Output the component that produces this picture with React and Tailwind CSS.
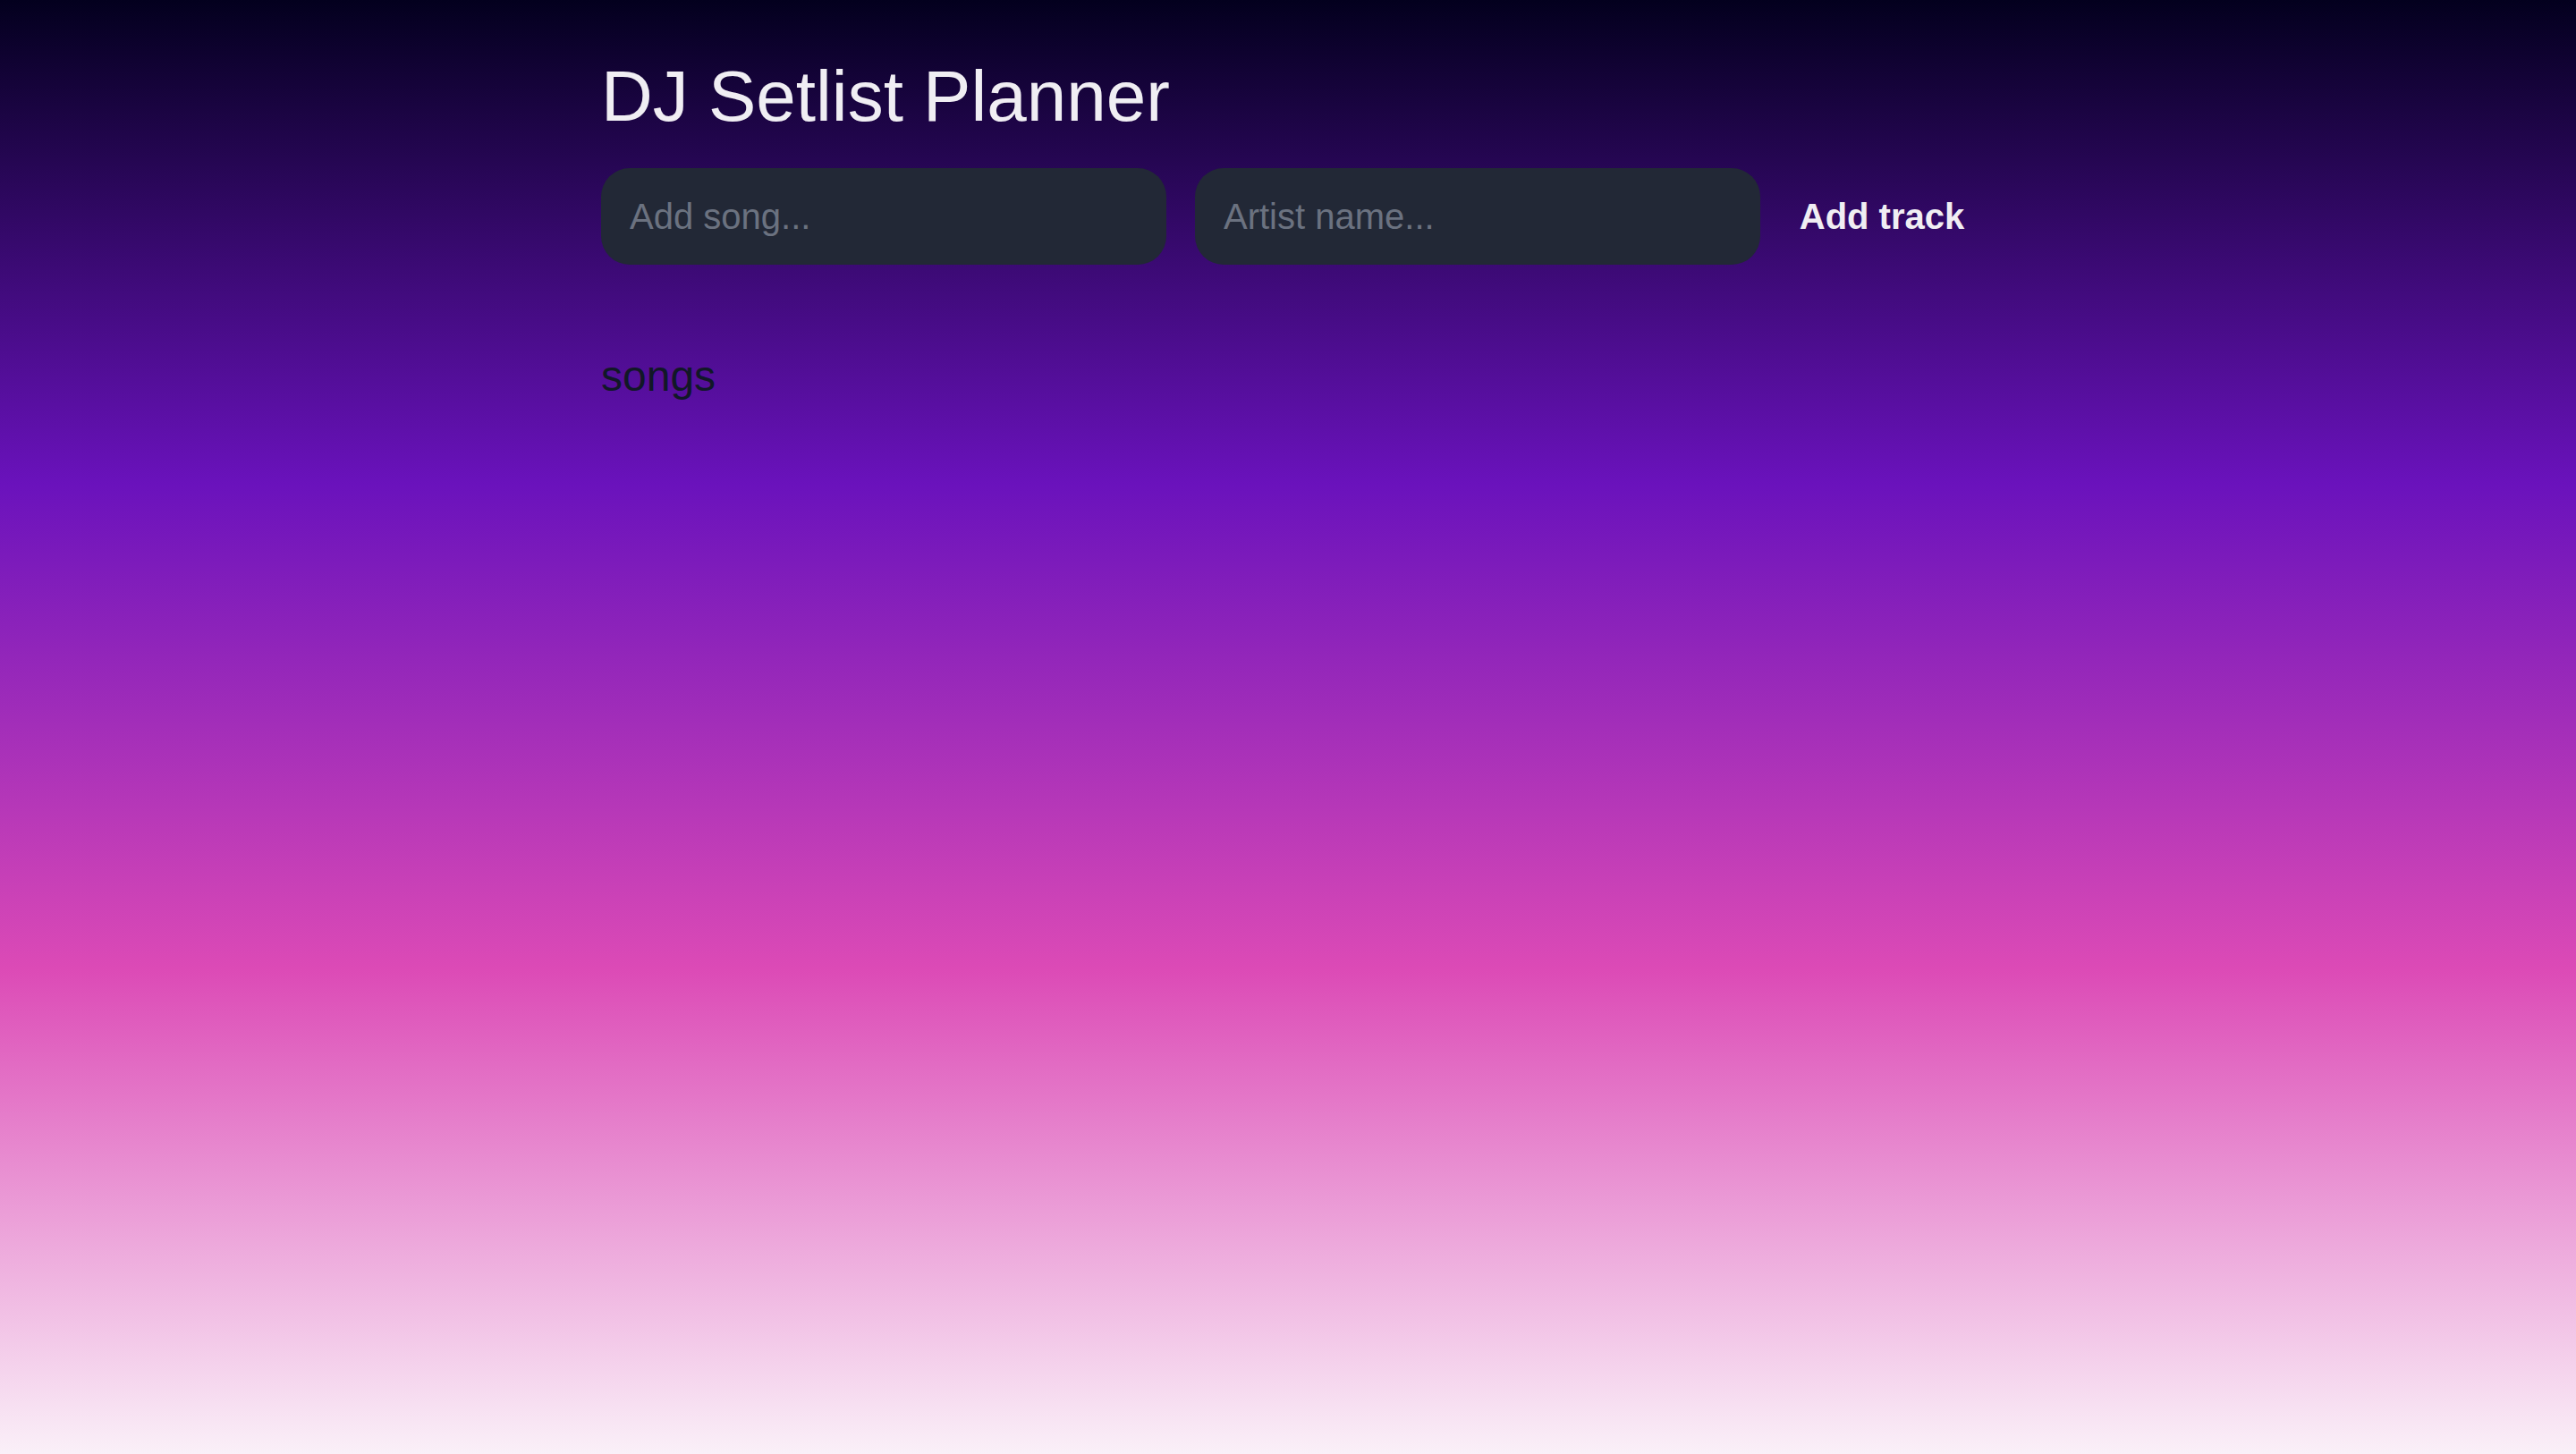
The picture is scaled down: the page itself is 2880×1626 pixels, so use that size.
import { useState } from "react";

export default function App() {
  const [song, setSong] = useState("");
  const [artist, setArtist] = useState("");
  const [songs, setSongs] = useState([]);

  const addTrack = () => {
    if (!song.trim()) return;
    setSongs([...songs, { song, artist }]);
    setSong("");
    setArtist("");
  };

  return (
    <div className="min-h-screen bg-[linear-gradient(to_bottom,#03001e_0%,#6a12bc_33.3%,#dc4ab6_66.6%,#faf0f8_100%)] font-['Liberation_Sans',Arial,sans-serif]">
      <div className="max-w-[1536px] mx-auto pt-[62px]">
        <h1 className="text-[80px] leading-[92px] text-[#f0eef3] mb-[34px]">DJ Setlist Planner</h1>

        <div className="flex gap-8">
          <input
            value={song}
            onChange={(e) => setSong(e.target.value)}
            placeholder="Add song..."
            className="flex-1 min-w-0 h-[108px] px-8 rounded-[32px] bg-[#222836] text-[40px] text-gray-100 placeholder:text-[#6b7280] outline-none"
          />
          <input
            value={artist}
            onChange={(e) => setArtist(e.target.value)}
            placeholder="Artist name..."
            className="flex-1 min-w-0 h-[108px] px-8 rounded-[32px] bg-[#222836] text-[40px] text-gray-100 placeholder:text-[#6b7280] outline-none"
          />
          <button
            onClick={addTrack}
            className="w-[208px] text-[40px] font-bold text-[#f0eef3] text-center"
          >
            Add track
          </button>
        </div>

        <h2 className="mt-[97px] text-[48px] leading-[55px] text-[#111827]">songs</h2>
        <ul>
          {songs.map((s, i) => (
            <li key={i} className="text-[40px] text-gray-100">
              {s.song} {s.artist && `- ${s.artist}`}
            </li>
          ))}
        </ul>
      </div>
    </div>
  );
}
